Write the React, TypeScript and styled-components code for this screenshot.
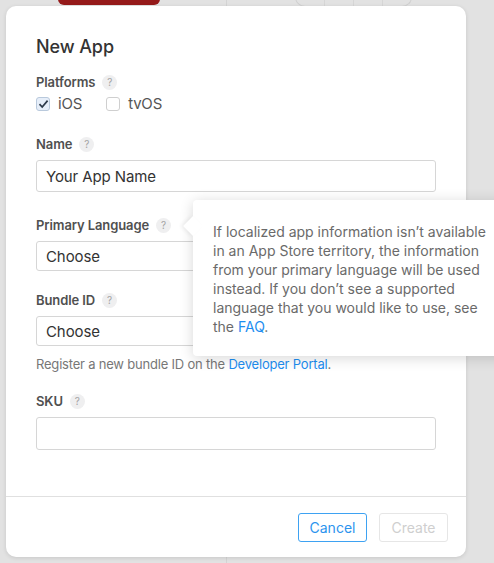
import React from 'react';
import styled, { createGlobalStyle } from 'styled-components';

const GlobalStyle = createGlobalStyle`
  html, body {
    margin: 0;
    padding: 0;
    width: 494px;
    height: 563px;
    overflow: hidden;
    background: #e2e2e2;
    font-family: Inter, "Helvetica Neue", "Liberation Sans", sans-serif;
    -webkit-font-smoothing: antialiased;
  }
`;

const Page = styled.div`
  position: relative;
  width: 494px;
  height: 563px;
  background: #e2e2e2;
  overflow: hidden;
`;

// dimmed page that sits behind the modal
const Backdrop = styled.div`
  display: flex;
  align-items: flex-start;
  height: 100%;
`;

const LeftPane = styled.div`
  width: 227px;
  height: 100%;
  border-right: 1px solid #d4d4d4;
  padding-left: 58px;
  box-sizing: border-box;
`;

const RedPill = styled.div`
  width: 102px;
  height: 6px;
  margin-top: -1px;
  background: #951a1a;
  border-radius: 0 0 8px 8px;
`;

const RightPane = styled.div`
  flex: 1;
  padding-left: 68px;
`;

const Segmented = styled.div`
  display: flex;
  width: 115px;
  height: 8px;
  margin-top: -3px;
  border: 1px solid #d0d0d0;
  border-radius: 0 0 12px 12px;
  & > span {
    flex: 1;
    border-right: 1px solid #d6d6d6;
  }
  & > span:last-child {
    border-right: none;
  }
`;

const Modal = styled.div`
  position: absolute;
  left: 6px;
  top: 6px;
  width: 460px;
  height: 551px;
  background: #fff;
  border-radius: 10px;
  box-shadow: 0 1px 4px rgba(0, 0, 0, 0.12);
  display: flex;
  flex-direction: column;
`;

const Body = styled.div`
  flex: 1;
  padding: 29px 30px 0;
  display: flex;
  flex-direction: column;
`;

const Title = styled.h2`
  margin: 0 0 14px;
  font-size: 18px;
  line-height: 24px;
  font-weight: 500;
  color: #333;
  letter-spacing: -0.1px;
`;

const Field = styled.div<{ $gap?: number }>`
  position: relative;
  margin-bottom: ${(p) => p.$gap ?? 24}px;
`;

const Label = styled.div`
  display: flex;
  align-items: center;
  gap: 7px;
  height: 18px;
  margin-bottom: 7px;
  font-size: 13px;
  font-weight: 600;
  color: #505050;
  letter-spacing: -0.1px;
`;

const Help = styled.span`
  display: inline-flex;
  align-items: center;
  justify-content: center;
  width: 15px;
  height: 15px;
  border-radius: 50%;
  background: #efeff0;
  color: #a4a4a4;
  font-size: 10px;
  font-weight: 400;
`;

const Checks = styled.div`
  display: flex;
  gap: 24px;
  margin-top: -3px;
  height: 18px;
`;

const CheckLabel = styled.label`
  display: flex;
  align-items: center;
  gap: 8px;
  font-size: 15px;
  line-height: 18px;
  color: #555;
  letter-spacing: -0.2px;
`;

const Box = styled.span<{ $on?: boolean }>`
  display: inline-flex;
  align-items: center;
  justify-content: center;
  width: 12px;
  height: 12px;
  border: 1px solid ${(p) => (p.$on ? '#b9c9dc' : '#cfcfcf')};
  border-radius: 3px;
  background: ${(p) => (p.$on ? '#e6eef9' : '#fff')};
`;

const Input = styled.div<{ $h?: number }>`
  display: flex;
  align-items: center;
  height: ${(p) => p.$h ?? 32}px;
  box-sizing: border-box;
  padding: 0 9px;
  border: 1px solid #d6d6d6;
  border-radius: 3px;
  font-size: 15px;
  color: #333;
  letter-spacing: -0.1px;
`;

const Hint = styled.div`
  margin-top: 9px;
  font-size: 13px;
  line-height: 18px;
  color: #777;
  letter-spacing: -0.2px;
`;

const Link = styled.a`
  color: #1e8ef0;
  text-decoration: none;
`;

const Popover = styled.div`
  position: absolute;
  left: 157px;
  top: -16px;
  width: 320px;
  padding: 22px 20px 20px;
  background: #fff;
  border-radius: 4px;
  box-shadow: 0 2px 14px rgba(0, 0, 0, 0.16);
  font-size: 14px;
  line-height: 19px;
  color: #6a6a6a;
  z-index: 2;
  &::before {
    content: '';
    position: absolute;
    left: -7px;
    top: 19px;
    width: 14px;
    height: 14px;
    background: #fff;
    transform: rotate(45deg);
    box-shadow: -2px 2px 4px rgba(0, 0, 0, 0.06);
  }
`;

const PopText = styled.div`
  position: relative;
`;

const Footer = styled.div`
  height: 60px;
  border-top: 1px solid #e0e0e0;
  display: flex;
  align-items: center;
  justify-content: flex-end;
  gap: 12px;
  padding: 0 18px 0 0;
`;

const Button = styled.button<{ $disabled?: boolean }>`
  height: 29px;
  width: 69px;
  padding: 0;
  background: #fff;
  border: 1px solid ${(p) => (p.$disabled ? '#e6e6e6' : '#3ea2f2')};
  border-radius: 3px;
  font-family: inherit;
  font-size: 14px;
  color: ${(p) => (p.$disabled ? '#cfcfcf' : '#2c94ee')};
`;

const Check = () => (
  <svg width="11" height="10" viewBox="0 0 11 10">
    <path d="M1.5 5.2 L4.2 8 L9.6 1.6" fill="none" stroke="#2d3a4a" strokeWidth="1.7" />
  </svg>
);

const App: React.FC = () => {
  return (
    <Page>
      <GlobalStyle />
      <Backdrop>
        <LeftPane>
          <RedPill />
        </LeftPane>
        <RightPane>
          <Segmented>
            <span />
            <span />
            <span />
            <span />
          </Segmented>
        </RightPane>
      </Backdrop>
      <Modal>
        <Body>
          <Title>New App</Title>
          <Field $gap={22}>
            <Label>
              Platforms <Help>?</Help>
            </Label>
            <Checks>
              <CheckLabel>
                <Box $on>
                  <Check />
                </Box>
                iOS
              </CheckLabel>
              <CheckLabel>
                <Box />
                tvOS
              </CheckLabel>
            </Checks>
          </Field>
          <Field>
            <Label>
              Name <Help>?</Help>
            </Label>
            <Input>Your App Name</Input>
          </Field>
          <Field $gap={20}>
            <Label>
              Primary Language <Help>?</Help>
            </Label>
            <Input $h={30}>Choose</Input>
            <Popover>
              <PopText>
                If localized app information isn’t available
                <br />
                in an App Store territory, the information
                <br />
                from your primary language will be used
                <br />
                instead. If you don’t see a supported
                <br />
                language that you would like to use, see
                <br />
                the <Link href="#">FAQ</Link>.
              </PopText>
            </Popover>
          </Field>
          <Field $gap={19}>
            <Label>
              Bundle ID <Help>?</Help>
            </Label>
            <Input $h={30}>Choose</Input>
            <Hint>
              Register a new bundle ID on the <Link href="#">Developer Portal</Link>.
            </Hint>
          </Field>
          <Field>
            <Label>
              SKU <Help>?</Help>
            </Label>
            <Input $h={33} />
          </Field>
        </Body>
        <Footer>
          <Button>Cancel</Button>
          <Button $disabled>Create</Button>
        </Footer>
      </Modal>
    </Page>
  );
};

export default App;
